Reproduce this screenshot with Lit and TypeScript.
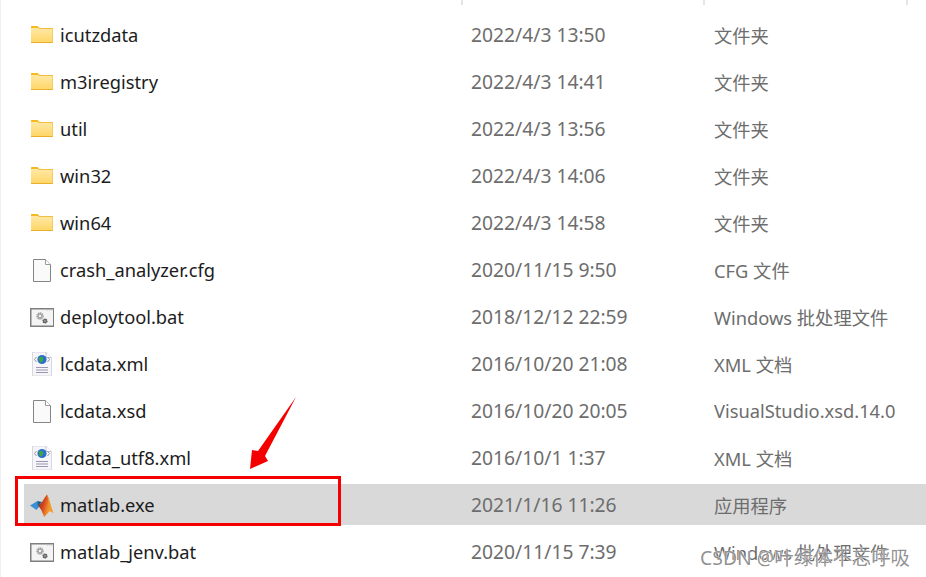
import { LitElement, html, css, svg } from "lit";
import { customElement } from "lit/decorators.js";

type Kind = "folder" | "file" | "bat" | "xml" | "matlab";
const rows: { n: string; d: string; t: string; k: Kind; sel?: boolean }[] = [
  { n: "icutzdata", d: "2022/4/3 13:50", t: "文件夹", k: "folder" },
  { n: "m3iregistry", d: "2022/4/3 14:41", t: "文件夹", k: "folder" },
  { n: "util", d: "2022/4/3 13:56", t: "文件夹", k: "folder" },
  { n: "win32", d: "2022/4/3 14:06", t: "文件夹", k: "folder" },
  { n: "win64", d: "2022/4/3 14:58", t: "文件夹", k: "folder" },
  { n: "crash_analyzer.cfg", d: "2020/11/15 9:50", t: "CFG 文件", k: "file" },
  { n: "deploytool.bat", d: "2018/12/12 22:59", t: "Windows 批处理文件", k: "bat" },
  { n: "lcdata.xml", d: "2016/10/20 21:08", t: "XML 文档", k: "xml" },
  { n: "lcdata.xsd", d: "2016/10/20 20:05", t: "VisualStudio.xsd.14.0", k: "file" },
  { n: "lcdata_utf8.xml", d: "2016/10/1 1:37", t: "XML 文档", k: "xml" },
  { n: "matlab.exe", d: "2021/1/16 11:26", t: "应用程序", k: "matlab", sel: true },
  { n: "matlab_jenv.bat", d: "2020/11/15 7:39", t: "Windows 批处理文件", k: "bat" },
];

const gear = (cx: number, cy: number, r: number, c: string) => svg`
  <circle cx=${cx} cy=${cy} r=${r} fill="none" stroke=${c} stroke-width=${r * 0.9} stroke-dasharray="1.2 0.5"/>
  <circle cx=${cx} cy=${cy} r=${r * 0.75} fill="none" stroke=${c} stroke-width="1.2"/>`;

const icons: Record<Kind, unknown> = {
  folder: svg`
    <defs><linearGradient id="fg" x1="0" y1="0" x2="0" y2="1"><stop offset="0" stop-color="#ffe9a6"/><stop offset="1" stop-color="#ffd564"/></linearGradient></defs>
    <path d="M1 3.5Q1 3 1.5 3H7.5L9.5 5H1Z" fill="#f6b81f"/>
    <rect x="1" y="5" width="22" height="15" fill="url(#fg)"/>
    <path d="M9 5H23V6H8Z" fill="#f3bd3f"/>
    <rect x="1" y="19" width="22" height="1" fill="#e9ae2c"/>
    <rect x="22.4" y="5" width=".6" height="15" fill="#eec04e"/>`,
  file: svg`
    <path d="M3.5 1.5H15.5L20.5 6.5V23.5H3.5Z" fill="#fafafa" stroke="#858585"/>
    <path d="M15.5 1.5V6.5H20.5" fill="#fff" stroke="#9a9a9a"/>`,
  bat: svg`
    <rect x=".75" y="3.75" width="23" height="17.5" fill="#f4f4f4" stroke="#7f7f7f" stroke-width="1.5"/>
    <path d="M17 5H23" stroke="#b5b5b5" stroke-dasharray="1 1"/>
    ${gear(10, 11, 2.6, "#a3a3a3")}
    ${gear(15, 16, 1.8, "#606060")}`,
  xml: svg`
    <path d="M2.5 0H16L21.5 5.5V24H2.5Z" fill="#f5f5fa" stroke="#d8d8de"/>
    <path d="M16 0V5.5H21.5" fill="#fff" stroke="#c8c8d0"/>
    <path d="M6.5 5L4.5 7.5L6.5 10M17.5 5L19.5 7.5L17.5 10" fill="none" stroke="#8c8ca0" stroke-width=".9"/>
    <circle cx="12" cy="7.5" r="4.6" fill="#2b6fd0"/>
    <path d="M9.5 5.2Q12 3.8 13 6T12 9.8L10 10.5Q8.3 7 9.5 5.2Z" fill="#3fa83a"/>
    <path d="M6 15.5H18M6 18H18M6 20.5H18" stroke="#9a98b0" stroke-width="1.2"/>`,
  matlab: svg`
    <defs>
      <linearGradient id="mg" x1="0" y1="0" x2="1" y2=".4"><stop offset="0" stop-color="#7a2c18"/><stop offset=".45" stop-color="#d2441f"/><stop offset=".75" stop-color="#ee8a2c"/><stop offset="1" stop-color="#f6b13c"/></linearGradient>
    </defs>
    <path d="M0 12.5L7.5 8L11 11.5L6.5 17Z" fill="#3a90d4"/>
    <path d="M7.5 8L12 9L8 13.5Z" fill="#1f5f8c"/>
    <path d="M17 1.5C19.5 6 21 15 23.5 20L20 18C18 20 16 22 14 24C13 20 10.5 15 8 12.5C12 11 14 5 17 1.5Z" fill="url(#mg)"/>
    <path d="M17 1.5C19.5 6 21 15 23.5 20L20 18C19 12 18 6 17 1.5Z" fill="#f09a2e"/>`,
};

@customElement("app-root")
export class AppRoot extends LitElement {
  static styles = css`
    :host {
      display: block;
      position: relative;
      width: 926px;
      height: 577px;
      overflow: hidden;
      background: #fff;
      box-sizing: border-box;
      border-left: 1px solid #f0f0f0;
      font-family: "Noto Sans", "Noto Sans CJK SC", sans-serif;
      font-size: 18.3px;
    }
    .head {
      display: grid;
      grid-template-columns: 462px 242px 203px;
      height: 5px;
    }
    .head div { border-right: 2px solid #e5e5e5; }
    .list {
      display: flex;
      flex-direction: column;
      gap: 6px;
      padding: 9px 0 0 23px;
    }
    .row {
      display: grid;
      grid-template-columns: 30px 411px 243px 1fr;
      align-items: center;
      height: 41px;
      padding-left: 6px;
      color: #1c1c1c;
      white-space: nowrap;
    }
    .row.sel { background: #d9d9d9; }
    .ic { display: block; width: 24px; height: 24px; }
    .date { color: #6d6d6d; font-size: 19.25px; }
    .type { color: #6d6d6d; }
    .box {
      position: absolute;
      left: 14px;
      top: 476px;
      width: 326px;
      height: 50px;
      box-sizing: border-box;
      border: 3px solid #f40000;
    }
    .arrow { position: absolute; left: 240px; top: 390px; width: 64px; height: 84px; }
    .mark {
      position: absolute;
      left: 699px;
      top: 544px;
      font-size: 19.4px;
      line-height: 27px;
      color: rgba(125, 125, 125, 0.85);
      text-shadow: 0 0 1px #fff, 0 0 1px #fff;
      white-space: nowrap;
    }
  `;

  render() {
    return html`
      <div class="head"><div></div><div></div><div></div></div>
      <div class="list">
        ${rows.map(
          (r) => html`<div class="row ${r.sel ? "sel" : ""}">
            <svg class="ic" viewBox="0 0 24 24">${icons[r.k]}</svg>
            <span>${r.n}</span>
            <span class="date">${r.d}</span>
            <span class="type">${r.t}</span>
          </div>`
        )}
      </div>
      <div class="box"></div>
      <svg class="arrow" viewBox="0 0 64 84">
        <path d="M55 7L17 61L11 60L9 79L27 71L24 66Z" fill="#f40000"/>
      </svg>
      <div class="mark">CSDN @叶绿体不忘呼吸</div>
    `;
  }
}
